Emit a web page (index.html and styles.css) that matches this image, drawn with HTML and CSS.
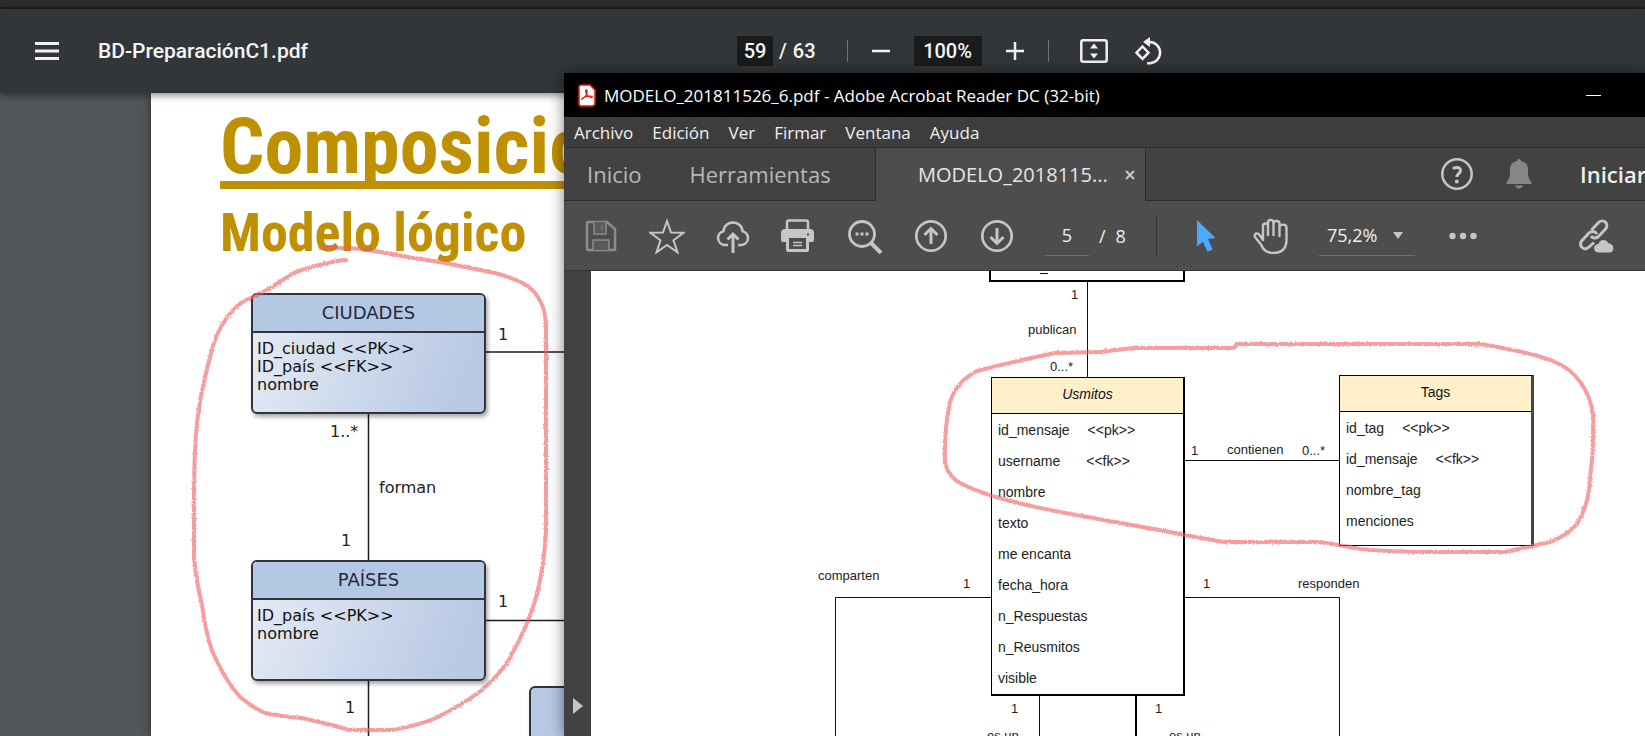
FILE: index.html
```html
<!DOCTYPE html>
<html lang="es">
<head>
<meta charset="utf-8">
<title>BD-PreparaciónC1.pdf</title>
<link rel="stylesheet" href="styles.css">
</head>
<body>
<div class="browser-edge"></div>
<header class="viewer-bar">
  <div class="viewer-file">
    <button class="icon-btn menu-btn" aria-label="Menú"><svg width="24" height="18" viewBox="0 0 24 18"><path d="M0 1.5h24M0 9h24M0 16.5h24" stroke="#f1f1f1" stroke-width="3"/></svg></button>
    <h1 class="file-name">BD-PreparaciónC1.pdf</h1>
  </div>
  <div class="viewer-tools">
    <div class="page-pick"><input class="dark-field page-field" value="59" aria-label="Página"><span>/</span><span>63</span></div>
    <span class="rule"></span>
    <button class="icon-btn" aria-label="Alejar"><svg width="24" height="24" viewBox="0 0 24 24"><path d="M3 12h18" stroke="#f1f1f1" stroke-width="2.5"/></svg></button>
    <input class="dark-field zoom-field" value="100%" aria-label="Zoom">
    <button class="icon-btn" aria-label="Acercar"><svg width="24" height="24" viewBox="0 0 24 24"><path d="M3 12h18M12 3v18" stroke="#f1f1f1" stroke-width="2.5"/></svg></button>
    <span class="rule"></span>
    <button class="icon-btn fit-btn" aria-label="Ajustar a la página"><svg width="28" height="24" viewBox="0 0 28 24"><rect x="1.3" y="1.3" width="25.4" height="21.4" rx="2" fill="none" stroke="#f1f1f1" stroke-width="2.5"/><path d="M14 4.5l4 5h-8zM14 19.500l4-5h-8z" fill="#f1f1f1"/></svg></button>
    <button class="icon-btn rotate-btn" aria-label="Girar"><svg width="30" height="30" viewBox="0 0 30 30"><g fill="none" stroke="#f1f1f1" stroke-width="2.5"><path d="M9.500 10.500l6 6.200-6 6.200-6-6.200z"/><path d="M14 6h2.500a10.600 10.600 0 0 1 0 21.200H14"/></g><path d="M10 6l7-5v10z" fill="#f1f1f1"/></svg></button>
  </div>
</header>

<main class="viewer">
  <article class="page">
    <h2 class="slide-title">Composición</h2>
    <h3 class="slide-subtitle">Modelo lógico</h3>
    <svg class="edges" aria-hidden="true">
      <g class="blue-edges" transform="translate(-151 -93)">
        <path d="M368.500 413V560M368.500 681V760M485 352H620M485 620.500H620"/>
      </g>
      <g class="blue-labels" transform="translate(-151 -93)">
        <text x="498" y="340">1</text><text x="330" y="437">1..*</text><text x="379" y="493">forman</text>
        <text x="341" y="546">1</text><text x="498" y="607">1</text><text x="345" y="713">1</text>
      </g>
    </svg>
    <section class="entity-blue ciudades"><h4>CIUDADES</h4><ul><li>ID_ciudad &lt;&lt;PK&gt;&gt;</li><li>ID_país &lt;&lt;FK&gt;&gt;</li><li>nombre</li></ul></section>
    <section class="entity-blue paises"><h4>PAÍSES</h4><ul><li>ID_país &lt;&lt;PK&gt;&gt;</li><li>nombre</li></ul></section>
    <section class="entity-blue other"></section>
  </article>
</main>

<section class="acrobat">
  <div class="title-bar">
    <svg width="18" height="23" viewBox="0 0 18 23"><path d="M3 1h9l5 5v13a3 3 0 0 1-3 3H3a2 2 0 0 1-2-2V3a2 2 0 0 1 2-2z" fill="#fff" stroke="#f0140a" stroke-width="1.600"/><path d="M4 15c4-2 5.500-6 5-8.500-.5-1.500-2-.5-1.300 1.500.8 2.500 3.300 5 5.800 5.500 1.500.2 1-1.500-1-1.500-3 0-6 .8-8 2.200-1.200 1-.8 1.500-.5.8z" fill="none" stroke="#e0140a" stroke-width="1.200"/></svg>
    <span class="window-title">MODELO_201811526_6.pdf - Adobe Acrobat Reader DC (32-bit)</span>
    <button class="icon-btn minimize" aria-label="Minimizar"><svg width="15" height="9" viewBox="0 0 15 9"><path d="M0 4.500h15" stroke="#fff"/></svg></button>
  </div>
  <nav class="menu-bar">
    <button>Archivo</button><button>Edición</button><button>Ver</button><button>Firmar</button><button>Ventana</button><button>Ayuda</button>
  </nav>
  <div class="tab-bar">
    <div class="home-tabs"><button>Inicio</button><button>Herramientas</button></div>
    <div class="doc-tab"><span>MODELO_2018115...</span><button class="icon-btn" aria-label="Cerrar"><svg width="10" height="10" viewBox="0 0 10 10"><path d="M1 1l8 8M9 1l-8 8" stroke="#c8c8c8" stroke-width="2"/></svg></button></div>
    <div class="account">
      <button class="icon-btn" aria-label="Ayuda"><svg width="32" height="32" viewBox="0 0 32 32"><circle cx="16" cy="16" r="14.700" fill="none" stroke="#c6c6c6" stroke-width="2.500"/><path d="M12 11c2-2.500 7.500-2 7.500 1.500 0 3-3.700 3.200-3.700 6.500" fill="none" stroke="#c6c6c6" stroke-width="3"/><circle cx="15.800" cy="23.500" r="2" fill="#c6c6c6"/></svg></button>
      <button class="icon-btn" aria-label="Notificaciones"><svg width="26" height="30" viewBox="0 0 26 30"><path d="M11 2a2 2 0 0 1 4 0c5 1 7 4 7 9 0 7 .5 9 3.500 12v2H.5v-2C3.500 20 4 18 4 11c0-5 2-8 7-9zM9 26.500h8c-1 4-7 4-8 0z" fill="#868686"/></svg></button>
      <button class="sign-in">Iniciar</button>
    </div>
  </div>
  <div class="tool-bar">
    <button class="icon-btn" aria-label="Guardar"><svg width="36" height="36" viewBox="0 0 36 36"><path d="M5 4h19l8 7v21H5a1 1 0 0 1-1-1V5a1 1 0 0 1 1-1z" fill="none" stroke="#8c8c8c" stroke-width="2.500"/><path d="M11 4v12h12V4M10 32V22h16v10" fill="#5a5a5a" stroke="#8c8c8c" stroke-width="1.500"/><path d="M19 7v5" stroke="#8c8c8c"/></svg></button>
    <button class="icon-btn" aria-label="Favorito"><svg width="36" height="36" viewBox="0 0 36 36"><path d="M18 3l4 11.500 12.500.3-10 7.500 4 12L18 27 7.500 34.300l4-12-10-7.500 12.500-.3z" fill="none" stroke="#c6c6c6" stroke-width="2"/></svg></button>
    <button class="icon-btn" aria-label="Subir a la nube"><svg width="36" height="36" viewBox="0 0 36 36"><g fill="none" stroke="#c6c6c6" stroke-width="2.500"><path d="M13 27H9.500a7 7 0 0 1-1-13.800C9 7 14 4.500 18 4.500s9 2.500 9.500 8.700a7 7 0 0 1-1 13.800H23"/><path d="M18 35V16M12.500 21.500L18 16l5.500 5.500" stroke-width="3"/></g></svg></button>
    <button class="icon-btn" aria-label="Imprimir"><svg width="36" height="36" viewBox="0 0 36 36"><path d="M6 12V4.500a2 2 0 0 1 2-2h17a2 2 0 0 1 2 2V12" fill="none" stroke="#c6c6c6" stroke-width="2.500"/><path d="M4 11h25a4 4 0 0 1 4 4v7a2 2 0 0 1-2 2h-3v8a2 2 0 0 1-2 2H7a2 2 0 0 1-2-2v-8H2a2 2 0 0 1-2-2v-7a4 4 0 0 1 4-4z" fill="#c6c6c6"/><path d="M8 20h17v11H8z" fill="#4d4d4d"/><path d="M12 24.500h9M12 27.500h9" stroke="#c6c6c6" stroke-width="1.500"/><path d="M26 16.500h2" stroke="#4d4d4d" stroke-width="2"/></svg></button>
    <button class="icon-btn" aria-label="Buscar"><svg width="36" height="36" viewBox="0 0 36 36"><circle cx="15" cy="16" r="12.500" fill="none" stroke="#c6c6c6" stroke-width="2.800"/><path d="M24 25l10 10" stroke="#c6c6c6" stroke-width="4"/><path d="M8.500 16h3M13.500 16h3M18.500 16h3" stroke="#c6c6c6" stroke-width="3"/></svg></button>
    <button class="icon-btn" aria-label="Página anterior"><svg width="36" height="36" viewBox="0 0 36 36"><g fill="none" stroke="#c6c6c6"><circle cx="18" cy="18" r="14.700" stroke-width="2.700"/><path d="M18 26V11M11.500 17l6.500-6.500 6.500 6.500" stroke-width="3"/></g></svg></button>
    <button class="icon-btn" aria-label="Página siguiente"><svg width="36" height="36" viewBox="0 0 36 36"><g fill="none" stroke="#c6c6c6"><circle cx="18" cy="18" r="14.700" stroke-width="2.700"/><path d="M18 10v15M11.500 19l6.500 6.500 6.500-6.500" stroke-width="3"/></g></svg></button>
    <div class="doc-page"><input value="5" aria-label="Página del documento"><span>/</span><span>8</span></div>
    <span class="tool-rule"></span>
    <button class="icon-btn" aria-label="Seleccionar"><svg width="36" height="36" viewBox="0 0 36 36"><path d="M10 2l18.500 18-7.500 1 4.500 10.500-5 2.300-4.500-10-6 4.700z" fill="#4fa8ff"/></svg></button>
    <button class="icon-btn" aria-label="Mano"><svg width="36" height="36" viewBox="0 0 36 36"><g fill="none" stroke="#c6c6c6" stroke-width="2.400" stroke-linecap="round" stroke-linejoin="round"><path d="M10 22V8c0-3.300 5-3.300 5 0v9M15 8V4.500c0-3.500 5.500-3.500 5.500 0V17M20.500 5.500c0-3.300 6-3.300 6 0V18M26.500 9c0-3.300 7-3.300 7 .5v12c0 9-5 13.500-13.500 13.500-7 0-10-3.500-12-8.500L2 19c-1.500-3.500 2.500-4.500 4.700-2L10 22"/></g></svg></button>
    <label class="zoom-pick"><select aria-label="Nivel de zoom"><option>75,2%</option></select><svg width="10" height="7" viewBox="0 0 10 7"><path d="M0 0h10L5 7z" fill="#c6c6c6"/></svg></label>
    <button class="icon-btn" aria-label="Más herramientas"><svg width="36" height="36" viewBox="0 0 36 36"><g fill="#c6c6c6"><circle cx="7.500" cy="18" r="3.200"/><circle cx="18" cy="18" r="3.200"/><circle cx="28.500" cy="18" r="3.200"/></g></svg></button>
    <button class="icon-btn share" aria-label="Compartir enlace"><svg width="36" height="36" viewBox="0 0 36 36"><g fill="none" stroke="#c6c6c6" stroke-width="3"><path d="M13.500 12l7-7.500c5-4.500 11 1.500 7 6.500l-7 7.500c-3 2.500-6 1.500-7.500-.5"/><path d="M19 16c-2-3-5.500-3.500-8-1l-7 7.500c-4 5.500 2 11 7 6.500l5-4.500"/></g><path d="M20 34.500a4.200 4.200 0 0 1 .5-8.400c1-5 8-5.500 9.700-.8 6 .2 7 8 2 9.200z" fill="#c6c6c6"/></svg></button>
  </div>
  <div class="workspace">
    <aside class="rail"><button class="icon-btn" aria-label="Abrir panel"><svg width="10" height="16" viewBox="0 0 10 16"><path d="M0 0l10 8-10 8z" fill="#c6c6c6"/></svg></button></aside>
    <article class="canvas">
      <svg class="edges" aria-hidden="true">
        <g transform="translate(-591 -271)">
          <path class="thin-edge" d="M1087.500 281V377M1184 460.500H1339M991 597.500H835.500V760M1184 597.500H1339.500V760M1039.500 695V760M1040 273.500h8"/>
          <path class="thick-edge" d="M1136 695V760M990 260V281H1184V260"/>
        </g>
        <g class="black-labels" transform="translate(-591 -271)">
          <text x="1071" y="299">1</text><text x="1028" y="334">publican</text><text x="1050" y="371">0...*</text>
          <text x="1191" y="455">1</text><text x="1227" y="454">contienen</text><text x="1302" y="455">0...*</text>
          <text x="818" y="580">comparten</text><text x="963" y="588">1</text><text x="1203" y="588">1</text><text x="1298" y="588">responden</text>
          <text x="1011" y="713">1</text><text x="1155" y="713">1</text><text x="987" y="740">es un</text><text x="1169" y="740">es un</text>
        </g>
      </svg>
      <section class="entity usmitos"><h4><em>Usmitos</em></h4><ul><li>id_mensaje<span>&lt;&lt;pk&gt;&gt;</span></li><li class="user">username<span>&lt;&lt;fk&gt;&gt;</span></li><li>nombre</li><li>texto</li><li>me encanta</li><li>fecha_hora</li><li>n_Respuestas</li><li>n_Reusmitos</li><li>visible</li></ul></section>
      <section class="entity tags"><h4>Tags</h4><ul><li>id_tag<span>&lt;&lt;pk&gt;&gt;</span></li><li>id_mensaje<span>&lt;&lt;fk&gt;&gt;</span></li><li>nombre_tag</li><li>menciones</li></ul></section>
    </article>
  </div>
</section>

<svg class="marker" aria-hidden="true">
  <defs><filter id="crayon" x="-5%" y="-5%" width="110%" height="110%"><feTurbulence type="fractalNoise" baseFrequency="0.6" numOctaves="2" result="n"/><feDisplacementMap in="SourceGraphic" in2="n" scale="3"/></filter></defs>
  <g filter="url(#crayon)">
  <path d="M346 260C330 261 315 266 298 271C285 277 270 290 255 296Q240 302 234 309Q219 325 213 346Q202 385 198 415Q194 445 194 500V558Q197 585 202 605Q207 640 214 655Q225 680 240 697Q253 708 265 713Q285 717 302 718Q325 723 350 730H392Q420 725 436 718Q460 706 482 690Q498 676 508 661Q529 625 537 594Q545 560 546 530V325Q545 300 529 287Q520 280 495 273L440 262Q400 256 375 251Q350 247 320 248"/>
  <path d="M1300 344H1237L1234 348H1134Q1115 350 1100 352L1055 353Q1015 361 977 371Q957 381 950 402Q944 430 945 463Q949 478 962 484C990 498 1030 506 1060 512L1170 532Q1205 539 1225 542H1320Q1340 545 1360 549Q1390 552 1430 552H1505L1550 542Q1568 535 1577 524Q1589 505 1590 478Q1594 450 1593 415C1590 390 1575 370 1555 362Q1535 353 1480 344H1300"/>
  </g>
</svg>
</body>
</html>
```
FILE: styles.css
```css
* { box-sizing: border-box; }

body {
  margin: 0;
  height: 100vh;
  overflow: hidden;
  position: relative;
  display: flex;
  flex-direction: column;
  background: #525659;
  font-family: "Open Sans", "Noto Sans", sans-serif;
}

h1, h2, h3, h4, ul { margin: 0; padding: 0; font-weight: normal; list-style: none; }
button, input, select { font: inherit; color: inherit; border: 0; background: none; padding: 0; margin: 0; }
svg { display: block; }
.icon-btn { display: flex; align-items: center; justify-content: center; flex: none; }

/* Browser PDF viewer */
.browser-edge { flex: none; height: 9px; background: #2b2b2b; border-bottom: 2px solid #1f1f1f; }
.viewer-bar {
  flex: none;
  height: 84px;
  display: flex;
  align-items: center;
  background: #323639;
  color: #f5f5f5;
  font: 500 20px Roboto, sans-serif;
  box-shadow: 0 2px 8px rgba(0, 0, 0, .5);
  z-index: 1;
}
.viewer-file { width: 737px; display: flex; align-items: center; gap: 39px; padding-left: 35px; }
.file-name { font-size: 21px; font-weight: 500; }
.viewer-tools { display: flex; align-items: center; gap: 21px; }
.page-pick { display: flex; align-items: center; gap: 6px; margin-right: 10px; }
.dark-field { height: 30px; background: #191b1c; text-align: center; }
.page-field { width: 36px; }
.zoom-field { width: 68px; }
.rule { width: 1px; height: 22px; background: #6f7274; }
.fit-btn { margin-left: 10px; }
.rotate-btn { margin-left: 4px; }

.viewer { flex: 1; min-height: 0; padding-left: 151px; display: flex; overflow: hidden; }
.page {
  flex: 1;
  position: relative;
  overflow: hidden;
  padding: 8px 0 0 69px;
  background: #fff;
  box-shadow: 0 0 8px rgba(0, 0, 0, .5);
  color: #bf9000;
  font-family: "Liberation Sans Narrow", "Roboto Condensed", "DejaVu Sans Condensed", sans-serif;
  white-space: nowrap;
}
.slide-title {
  font-size: 78px;
  font-weight: 700;
  line-height: 92px;
  text-decoration: underline;
  text-decoration-thickness: 8px;
  text-decoration-skip-ink: none;
  text-underline-offset: 8px;
}
.slide-subtitle { font-size: 54px; font-weight: 700; line-height: 80px; }
.edges { position: absolute; left: 0; top: 0; width: 100%; height: 100%; }
.blue-edges { fill: none; stroke: #1c1c1c; stroke-width: 1.5; }
.blue-labels { fill: #222; font: 16px "DejaVu Sans", sans-serif; }

.entity-blue {
  position: absolute;
  left: 100px;
  width: 235px;
  height: 121px;
  border: 2px solid #30343c;
  border-radius: 6px;
  background: linear-gradient(110deg, #e6ecf5, #b8c9e4 90%);
  box-shadow: 2px 3px 4px rgba(0, 0, 0, .35);
  color: #111;
  font: 16px/18px "DejaVu Sans", sans-serif;
}
.entity-blue h4 {
  height: 38px;
  line-height: 36px;
  font-size: 18px;
  text-align: center;
  color: #23283a;
  background: #b5c8e3;
  border-bottom: 2px solid #30343c;
  border-radius: 4px 4px 0 0;
}
.entity-blue ul { padding: 7px 4px; }
.ciudades { top: 200px; }
.paises { top: 467px; }
.other { left: 378px; top: 593px; background: #b8c9e4; }

/* Acrobat window */
.acrobat {
  position: absolute;
  left: 564px;
  right: 0;
  top: 73px;
  bottom: 0;
  z-index: 2;
  display: flex;
  flex-direction: column;
  overflow: hidden;
  color: #f0f0f0;
  background: #4d4d4d;
  box-shadow: 0 0 14px rgba(0, 0, 0, .5);
  white-space: nowrap;
}
.title-bar { flex: none; height: 44px; display: flex; align-items: center; gap: 8px; padding: 0 44px 0 14px; background: #000; font-size: 17px; color: #fff; }
.minimize { margin-left: auto; }
.menu-bar { flex: none; height: 31px; display: flex; align-items: center; gap: 19px; padding-left: 10px; background: #3d3d3d; border-bottom: 1px solid #2b2b2b; font-size: 17px; }
.tab-bar { flex: none; height: 53px; display: flex; font-size: 22px; }
.home-tabs { width: 312px; display: flex; gap: 48px; padding-left: 23px; background: #424242; color: #b8b8b8; border-right: 1px solid #2b2b2b; border-bottom: 1px solid #2b2b2b; }
.doc-tab { width: 269px; display: flex; align-items: center; gap: 17px; padding-left: 42px; color: #e6e6e6; font-size: 20px; }
.account { flex: 1; display: flex; align-items: center; justify-content: flex-end; gap: 33px; background: #424242; border-left: 1px solid #2b2b2b; border-bottom: 1px solid #2b2b2b; }
.sign-in { width: 80px; padding-left: 15px; font-weight: 600; text-align: left; }
.tool-bar { flex: none; height: 70px; display: flex; align-items: center; gap: 30px; padding: 0 31px 0 19px; border-bottom: 1px solid #363636; font-size: 18px; }
.doc-page { display: flex; align-items: center; gap: 10px; width: 81px; }
.doc-page input { width: 44px; height: 41px; text-align: center; border-bottom: 1px solid #707070; }
.tool-rule { width: 1px; height: 42px; background: #363636; }
.zoom-pick { width: 96px; height: 41px; display: flex; align-items: center; padding: 0 12px 0 8px; border-bottom: 1px solid #707070; }
.zoom-pick select { flex: 1; min-width: 0; appearance: none; }
.share { margin-left: auto; }

.workspace { flex: 1; min-height: 0; display: flex; }
.rail { flex: none; width: 27px; display: flex; flex-direction: column; justify-content: flex-end; align-items: center; padding-bottom: 22px; background: #424242; }
.canvas { flex: 1; position: relative; overflow: hidden; background: #fff; }
.thin-edge { fill: none; stroke: #111; stroke-width: 1; }
.thick-edge { fill: none; stroke: #000; stroke-width: 2; }
.black-labels { fill: #222; font: 13px "Liberation Sans", sans-serif; }
.entity { position: absolute; width: 194px; display: flex; flex-direction: column; border: 1px solid #000; background: #fff; color: #222; font: 14px "Liberation Sans", sans-serif; }
.entity h4 { flex: none; height: 36px; line-height: 33px; text-align: center; color: #111; background: #fff0cc; border-bottom: 1px solid #000; }
.entity ul { flex: 1; display: flex; flex-direction: column; padding: 0 6px; }
.entity li { flex: 1; display: flex; align-items: center; gap: 18px; }
.entity .user { gap: 26px; }
.usmitos { left: 400px; top: 106px; height: 319px; border-right-width: 2px; border-bottom-width: 2px; }
.tags { left: 748px; top: 104px; height: 171px; width: 195px; padding-bottom: 8px; border-right: 3px solid #444; }

.marker { position: absolute; inset: 0; width: 100%; height: 100%; z-index: 3; pointer-events: none; fill: none; stroke: #f05a5a; stroke-opacity: .6; stroke-width: 4; stroke-linejoin: round; stroke-linecap: round; }
```
